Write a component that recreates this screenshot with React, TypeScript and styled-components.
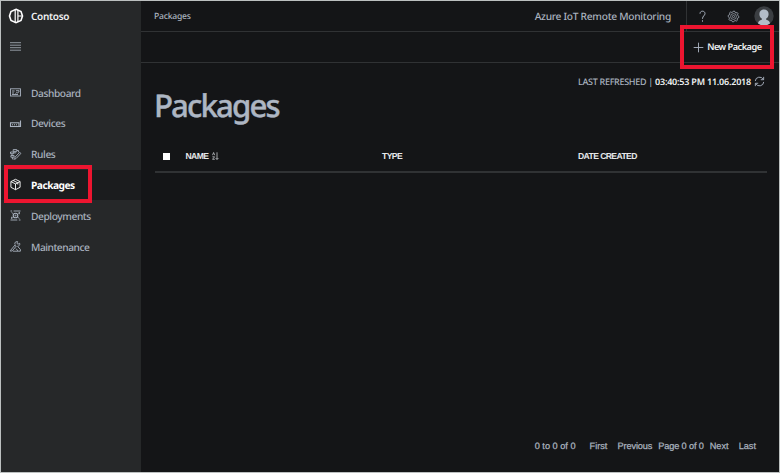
import React from "react";
import styled, { createGlobalStyle } from "styled-components";

const GlobalStyle = createGlobalStyle`
  *, *::before, *::after { box-sizing: border-box; }
  body {
    margin: 0;
    background: #141517;
    font-family: "Noto Sans", "Open Sans", sans-serif;
    text-rendering: geometricPrecision;
    overflow: hidden;
  }
`;

const Window = styled.div`
  position: relative;
  display: flex;
  width: 780px;
  height: 473px;
  border: 1px solid #bcc0c0;
  background: #141517;
`;

const Sidebar = styled.aside`
  flex: none;
  width: 140px;
  background: #262829;
`;

const Brand = styled.div`
  display: flex;
  align-items: center;
  height: 30px;
  padding-left: 7px;
  gap: 7px;
`;

const MenuToggle = styled.div`
  height: 46.2px;
  padding: 11px 0 0 9px;
  svg { display: block; }
`;

const NavItem = styled.div<{ $active?: boolean }>`
  display: flex;
  align-items: center;
  height: 30.8px;
  padding-left: 8px;
  gap: 9px;
  color: ${(p) => (p.$active ? "#ffffff" : "#a9b2bf")};
  background: ${(p) => (p.$active ? "#1b1c1e" : "transparent")};
  svg { flex: none; }
`;

const Label = styled.span<{ $size: number; $track?: number; $weight?: number; $color?: string }>`
  font-size: ${(p) => p.$size}px;
  line-height: 14px;
  letter-spacing: ${(p) => p.$track ?? 0}px;
  font-weight: ${(p) => p.$weight ?? 500};
  color: ${(p) => p.$color ?? "inherit"};
  white-space: nowrap;
`;

const Main = styled.main`
  display: flex;
  flex-direction: column;
  flex: 1;
  min-width: 0;
  color: #a9b2bf;
`;

const Header = styled.header`
  display: flex;
  align-items: center;
  height: 31px;
  border-bottom: 1px solid #303234;
  padding-left: 13px;
`;

const HeaderTitle = styled.div`
  display: flex;
  justify-content: flex-end;
  align-items: center;
  flex: 1;
  height: 30px;
  padding-right: 15px;
  border-right: 1px solid #303234;
`;

const HeaderActions = styled.div`
  display: flex;
  align-items: flex-end;
  width: 92px;
  height: 30px;
  padding-left: 9px;
  gap: 18px;
  overflow: hidden;
  svg { flex: none; margin-bottom: 8px; }
  svg:last-child { margin: 0 0 5px -4px; }
`;

const Toolbar = styled.div`
  display: flex;
  align-items: center;
  justify-content: flex-end;
  height: 31px;
  gap: 3px;
  padding-right: 17.5px;
  border-bottom: 1px solid #303234;
`;

const Content = styled.section`
  display: flex;
  flex-direction: column;
  flex: 1;
  padding: 11px 12px 0 14px;
`;

const Refreshed = styled.div`
  display: flex;
  align-items: center;
  justify-content: flex-end;
  height: 16px;
  padding-right: 2px;
  svg { margin: -2px 0 0 3px; }
`;

const Title = styled.h1`
  margin: -10px 0 9px -1px;
  height: 52px;
  font-size: 31.2px;
  line-height: 52px;
  font-weight: 500;
  letter-spacing: -1.9px;
  color: #adb6c3;
  -webkit-text-stroke: 0.4px #adb6c3;
`;

const TableHead = styled.div`
  display: grid;
  grid-template-columns: 30.5px 196.5px 196px 1fr;
  align-items: center;
  height: 32px;
  border-bottom: 2px solid #303234;
  font-family: "Liberation Sans", Arial, sans-serif;
  color: #e6e8ea;
`;

const Cell = styled.div`
  display: flex;
  align-items: center;
  gap: 4px;
`;

const Checkbox = styled.span`
  width: 7px;
  height: 7px;
  margin: 1px 0 0 8px;
  background: #ffffff;
`;

const Pager = styled.footer`
  display: flex;
  align-items: center;
  justify-content: flex-end;
  height: 14px;
  margin-top: auto;
  margin-bottom: 19.5px;
  padding-right: 11px;
  font-family: "Liberation Sans", Arial, sans-serif;
  -webkit-text-stroke: 0.25px #a9b2bf;
`;

const PagerItem = styled.div<{ $gap: number }>`
  display: flex;
  margin-left: ${(p) => p.$gap}px;
`;

const Highlight = styled.div<{ $x: number; $y: number; $w: number; $h: number }>`
  position: absolute;
  left: ${(p) => p.$x}px;
  top: ${(p) => p.$y}px;
  width: ${(p) => p.$w}px;
  height: ${(p) => p.$h}px;
  border: 4px solid #ed1530;
  pointer-events: none;
`;

const Icon = ({ children, size = 13 }: { children: React.ReactNode; size?: number }) => (
  <svg width={size} height={size} viewBox="0 0 13 13" fill="none" stroke="currentColor" strokeWidth="0.9">
    {children}
  </svg>
);

const icons: Record<string, React.ReactNode> = {
  Dashboard: (
    <Icon>
      <rect x="1.5" y="2.8" width="10" height="7.2" />
      <path d="M3 5h2.6M3 7h2M3 8.5h6M6.5 7.5l1.3-1 .9.6L10.3 5M7 4.7h3.3" strokeWidth="0.9" />
    </Icon>
  ),
  Devices: (
    <Icon>
      <rect x="1.5" y="5.8" width="8.5" height="3.7" strokeWidth="1.1" />
      <path d="M10 9.5h1.5V3.6M3 7.7h1M5 7.7h1M7 7.7h1" strokeWidth="1.1" />
    </Icon>
  ),
  Rules: (
    <Icon>
      <path d="M4.2 1.6h3.6v1.8H4.2zM1.5 4h3.2v1.7H1.5zM4.7 4.8h2.6M3 5.8v1.6M1.9 7.5h3.2v1.7H1.9zM3.4 9.2v1.8h1.4M5.6 11.4l.5-2.3 4.6-4.8 1.2 1.1-4.6 4.9zM7.8 2.5h1.7l-.1 1.8" />
    </Icon>
  ),
  Packages: (
    <Icon>
      <path d="M6.5 1.3l4.6 2.3v5.7l-4.6 2.4-4.6-2.4V3.6zM1.9 3.6l4.6 2.3 4.6-2.3M6.5 5.9v5.8M4.2 2.5l4.6 2.3v1.7" />
    </Icon>
  ),
  Deployments: (
    <Icon>
      <path d="M1.5 2h1.6M4.6 2h6.9M1.5 11h6.8M9.8 11h1.7M2.6 3.6l1.3.8M2.6 9.4l1.3-.8M10.4 3.6l-1.3.8M10.4 9.4l-1.3-.8M10.4 3.2v2M2.6 7.8v2" />
      <circle cx="6.5" cy="6.5" r="2.3" strokeWidth="1.1" />
      <circle cx="6.5" cy="6.5" r="0.5" />
    </Icon>
  ),
  Maintenance: (
    <Icon>
      <path d="M1.3 10.7l4.8-5.8 1.2 1.1-4 4.9-2 .2zM5.9 4.4c-.5-1.8.8-3.2 2.7-2.8L7.9 3.3l1.1.9 1.7-.9c.4 1.8-.7 2.9-2.1 2.9M8.6 6.4l2.8 3v1.8H9.2L7 8.6M4 11.2h5" />
    </Icon>
  ),
};

const Logo = () => (
  <svg width="16" height="16" viewBox="0 0 16 16" fill="none" stroke="#fff" strokeWidth="1.6">
    <path d="M8 1.3l5 2.2 1.5 4.5-1.5 4.5-5 2.2-5-2.2L1.5 8 3 3.5z" />
    <path d="M7.2 1.5v13M9.9 2v12M9.9 8h4.4" strokeWidth="1.2" />
  </svg>
);

const gearPath = Array.from({ length: 32 }, (_, i) => {
  const a = (i / 32) * Math.PI * 2;
  const r = i % 4 < 2 ? 5.4 : 4.4;
  return `${i ? "L" : "M"}${(6.5 + r * Math.cos(a)).toFixed(2)} ${(6.5 + r * Math.sin(a)).toFixed(2)}`;
}).join("") + "Z";

const Gear = () => (
  <Icon>
    <path d={gearPath} strokeWidth="0.8" />
    <circle cx="6.5" cy="6.5" r="2.9" strokeWidth="0.7" />
    <circle cx="6.5" cy="6.5" r="1.1" strokeWidth="0.7" />
  </Icon>
);

const Help = () => (
  <Icon>
    <path d="M4 3.7C4.1 2 5.1 1.2 6.5 1.2S9 2.1 9 3.6C9 5.6 6.5 5.9 6.5 8.8M6.5 10.3v1.4" strokeWidth="1" />
  </Icon>
);

const Avatar = () => (
  <svg width="20" height="20" viewBox="0 0 20 20">
    <circle cx="10" cy="10" r="9.7" fill="#3b3e42" />
    <path d="M4 17.6c.2-2.7 1.6-3.2 3.8-3.9v-1.2C6 11.5 5.4 9.8 5.4 8c0-2.8 1.9-4.4 4.6-4.4s4.6 1.6 4.6 4.4c0 1.8-.6 3.5-2.4 4.5v1.2c2.2.7 3.6 1.2 3.8 3.9a9.7 9.7 0 0 1-12 0z" fill="#b3bcc8" />
  </svg>
);

const navItems = [
  { name: "Dashboard", track: -0.42 },
  { name: "Devices", track: -0.38 },
  { name: "Rules", track: -0.4 },
  { name: "Packages", track: -0.5 },
  { name: "Deployments", track: -0.42 },
  { name: "Maintenance", track: -0.47 },
];

const pagerItems = [
  { text: "0 to 0 of 0", gap: 0, track: 0 },
  { text: "First", gap: 14, track: 0 },
  { text: "Previous", gap: 10, track: -0.1 },
  { text: "Page 0 of 0", gap: 6, track: -0.15 },
  { text: "Next", gap: 6, track: 0 },
  { text: "Last", gap: 10, track: 0 },
];

export default function App() {
  return (
    <>
      <GlobalStyle />
      <Window>
        <Sidebar>
          <Brand>
            <Logo />
            <Label $size={10} $weight={600} $color="#f0f1f2" $track={-0.3}>Contoso</Label>
          </Brand>
          <MenuToggle>
            <svg width="11" height="10" viewBox="0 0 11 10" stroke="#9299a1" strokeWidth="1">
              <path d="M0 .7h11M0 3.2h11M0 5.7h11M0 8.2h11" />
            </svg>
          </MenuToggle>
          <nav>
            {navItems.map(({ name, track }) => {
              const active = name === "Packages";
              return (
                <NavItem key={name} $active={active}>
                  {icons[name]}
                  <Label $size={10.2} $weight={active ? 700 : 500} $track={track}>{name}</Label>
                </NavItem>
              );
            })}
          </nav>
        </Sidebar>
        <Main>
          <Header>
            <Label $size={8.6} $track={-0.22}>Packages</Label>
            <HeaderTitle>
              <Label $size={10.2} $track={-0.28}>Azure IoT Remote Monitoring</Label>
            </HeaderTitle>
            <HeaderActions>
              <Help />
              <Gear />
              <Avatar />
            </HeaderActions>
          </Header>
          <Toolbar>
            <Icon size={11}>
              <path d="M6.5 0.8v11.4M0.8 6.5h11.4" strokeWidth="1.1" />
            </Icon>
            <Label $size={9.2} $weight={600} $color="#f0f1f2" $track={-0.52}>New Package</Label>
          </Toolbar>
          <Content>
            <Refreshed>
              <Label $size={9} $track={-0.3}>LAST REFRESHED |&nbsp;</Label>
              <Label $size={9} $weight={600} $color="#f0f1f2" $track={-0.21}>03:40:53 PM 11.06.2018</Label>
              <Icon size={11}>
                <path d="M1.5 6A5 5 0 0 1 11 4.2M11.5 7A5 5 0 0 1 2 8.8M11.4 1v3.4H8M1.6 12V8.6H5" strokeWidth="1.1" />
              </Icon>
            </Refreshed>
            <Title>Packages</Title>
            <TableHead>
              <Cell><Checkbox /></Cell>
              <Cell>
                <Label $size={8.6} $weight={700} $track={-0.6}>NAME</Label>
                <svg width="7" height="8" viewBox="0 0 7 8" fill="none" stroke="#c4c8cc" strokeWidth="0.8">
                  <path d="M.5 3.2L1.6.5l1.1 2.7M.4 4.8h2.2L.5 7.3h2.3M5 .3v7M3.6 6l1.4 1.5L6.4 6" />
                </svg>
              </Cell>
              <Cell><Label $size={8.6} $weight={700} $track={-0.6}>TYPE</Label></Cell>
              <Cell><Label $size={8.6} $weight={700} $track={-0.6}>DATE CREATED</Label></Cell>
            </TableHead>
            <Pager>
              {pagerItems.map(({ text, gap, track }) => (
                <PagerItem key={text} $gap={gap}>
                  <Label $size={9.2} $track={track} $weight={400}>{text}</Label>
                </PagerItem>
              ))}
            </Pager>
          </Content>
        </Main>
        <Highlight $x={3} $y={163.5} $w={88} $h={38.5} />
        <Highlight $x={679} $y={24} $w={94} $h={44} />
      </Window>
    </>
  );
}
